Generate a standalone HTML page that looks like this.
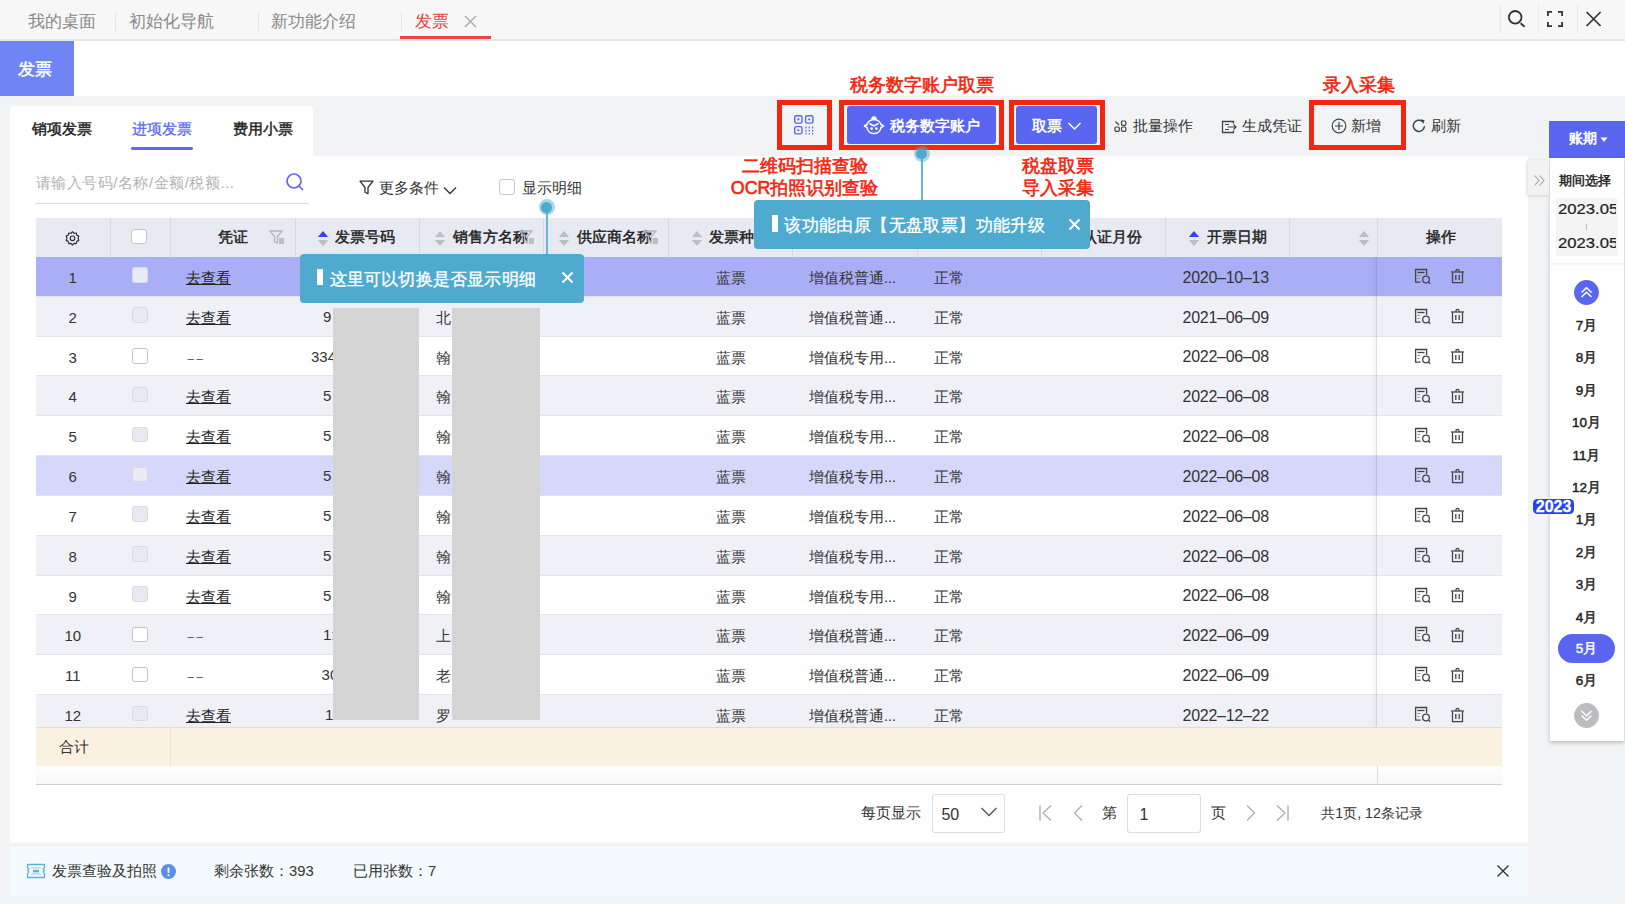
<!DOCTYPE html>
<html><head><meta charset="utf-8"><style>
html,body{margin:0;padding:0;width:1625px;height:904px;overflow:hidden;background:#f2f3f5}
#root{position:relative;width:1625px;height:904px;overflow:hidden;font-family:"Liberation Sans",sans-serif}
#root div,#root svg{position:absolute;box-sizing:border-box}
#root div div{}
</style></head><body><div id="root">
<div style="left:0px;top:0px;width:1625px;height:39px;background:#f7f7f8"></div>
<div style="left:0px;top:39px;width:1625px;height:1.5px;background:#e4e6ee"></div>
<div style="left:27.5px;top:10px;height:24px;line-height:24px;font-size:17px;color:#8a8a8a;font-weight:normal;white-space:nowrap;">我的桌面</div>
<div style="left:128.5px;top:10px;height:24px;line-height:24px;font-size:17px;color:#8a8a8a;font-weight:normal;white-space:nowrap;">初始化导航</div>
<div style="left:271px;top:10px;height:24px;line-height:24px;font-size:17px;color:#8a8a8a;font-weight:normal;white-space:nowrap;">新功能介绍</div>
<div style="left:114.5px;top:12px;width:1px;height:19px;background:#e3e5ee"></div>
<div style="left:258px;top:12px;width:1px;height:19px;background:#e3e5ee"></div>
<div style="left:400.5px;top:12px;width:1px;height:19px;background:#e3e5ee"></div>
<div style="left:415px;top:10px;height:24px;line-height:24px;font-size:17px;color:#e8403f;font-weight:normal;white-space:nowrap;">发票</div>
<svg style="left:464px;top:15px" width="13" height="13" viewBox="0 0 13 13"><path d="M1 1L12 12M12 1L1 12" stroke="#a8a8a8" stroke-width="1.4"/></svg>
<div style="left:400px;top:36px;width:91px;height:3px;background:#e8454a"></div>
<div style="left:1499.5px;top:5px;width:1px;height:28px;background:#e6e7ef"></div>
<div style="left:1538px;top:5px;width:1px;height:28px;background:#e6e7ef"></div>
<div style="left:1577px;top:5px;width:1px;height:28px;background:#e6e7ef"></div>
<svg style="left:1506px;top:8px" width="22" height="22" viewBox="0 0 22 22"><circle cx="9.2" cy="9.3" r="6.3" fill="none" stroke="#333" stroke-width="1.8"/><path d="M14.6 15.3L18.6 18.7" stroke="#333" stroke-width="1.8"/></svg>
<svg style="left:1546px;top:10px" width="18" height="18" viewBox="0 0 18 18"><path d="M1.9 6V1.9H6M12 1.9H16.1V6M16.1 12V16.1H12M6 16.1H1.9V12" fill="none" stroke="#333" stroke-width="1.8"/></svg>
<svg style="left:1585px;top:11px" width="17" height="16" viewBox="0 0 17 16"><path d="M1.6 1L15.6 15M15.6 1L1.6 15" stroke="#333" stroke-width="1.7"/></svg>
<div style="left:0px;top:40.5px;width:1625px;height:55.5px;background:#ffffff"></div>
<div style="left:0px;top:41px;width:74px;height:55px;background:#6f85f5"></div>
<div style="left:18px;top:59px;height:22px;line-height:22px;font-size:17px;color:#ffffff;font-weight:normal;white-space:nowrap;-webkit-text-stroke:0.45px #ffffff;">发票</div>
<div style="left:0px;top:96px;width:1625px;height:808px;background:#f2f3f5"></div>
<div style="left:10px;top:106px;width:303px;height:52px;background:#fff;border-radius:4px 4px 0 0"></div>
<div style="left:31.5px;top:119px;height:20px;line-height:20px;font-size:14.5px;color:#222;font-weight:normal;white-space:nowrap;-webkit-text-stroke:0.45px #222;">销项发票</div>
<div style="left:132px;top:119px;height:20px;line-height:20px;font-size:14.5px;color:#5a6bf0;font-weight:normal;white-space:nowrap;-webkit-text-stroke:0.3px #5a6bf0;">进项发票</div>
<div style="left:233px;top:119px;height:20px;line-height:20px;font-size:14.5px;color:#222;font-weight:normal;white-space:nowrap;-webkit-text-stroke:0.45px #222;">费用小票</div>
<div style="left:131px;top:146.5px;width:61.5px;height:3px;background:#5a6bf0;border-radius:2px"></div>
<div style="left:10px;top:156px;width:1518px;height:686px;background:#fff"></div>
<div style="left:35.5px;top:173px;height:20px;line-height:20px;font-size:14.8px;color:#b3b3b3;font-weight:normal;white-space:nowrap;letter-spacing:0.55px">请输入号码/名称/金额/税额...</div>
<svg style="left:284px;top:171px" width="22" height="22" viewBox="0 0 22 22"><circle cx="10" cy="10" r="7" fill="none" stroke="#5a6bf0" stroke-width="1.7"/><path d="M15 15L19 19" stroke="#5a6bf0" stroke-width="1.7"/></svg>
<div style="left:34.5px;top:202.5px;width:274.5px;height:1px;background:#dcdcdc"></div>
<svg style="left:359px;top:180px" width="15" height="15" viewBox="0 0 15 15"><path d="M1 1.2H14L9 7.5V13.8L6 12.2V7.5Z" fill="none" stroke="#333" stroke-width="1.3" stroke-linejoin="round"/></svg>
<div style="left:379px;top:178px;height:20px;line-height:20px;font-size:14.5px;color:#333;font-weight:normal;white-space:nowrap;">更多条件</div>
<svg style="left:443px;top:186px" width="14" height="9" viewBox="0 0 14 9"><path d="M1 1.5L7 7.5L13 1.5" fill="none" stroke="#333" stroke-width="1.3"/></svg>
<div style="left:499px;top:179px;width:15.5px;height:15.5px;background:#fff;border:1px solid #c8c8c8;border-radius:3px"></div>
<div style="left:522px;top:178px;height:20px;line-height:20px;font-size:14.5px;color:#333;font-weight:normal;white-space:nowrap;">显示明细</div>
<div style="left:36px;top:218px;width:1465.5px;height:39px;background:#e8eaf3"></div>
<div style="left:109.5px;top:218px;width:1px;height:39px;background:#d6d8e2"></div>
<div style="left:170px;top:218px;width:1px;height:39px;background:#d6d8e2"></div>
<div style="left:294.5px;top:218px;width:1px;height:39px;background:#d6d8e2"></div>
<div style="left:418.7px;top:218px;width:1px;height:39px;background:#d6d8e2"></div>
<div style="left:543.4px;top:218px;width:1px;height:39px;background:#d6d8e2"></div>
<div style="left:668px;top:218px;width:1px;height:39px;background:#d6d8e2"></div>
<div style="left:792px;top:218px;width:1px;height:39px;background:#d6d8e2"></div>
<div style="left:916.5px;top:218px;width:1px;height:39px;background:#d6d8e2"></div>
<div style="left:1040.8px;top:218px;width:1px;height:39px;background:#d6d8e2"></div>
<div style="left:1165.4px;top:218px;width:1px;height:39px;background:#d6d8e2"></div>
<div style="left:1289.3px;top:218px;width:1px;height:39px;background:#d6d8e2"></div>
<div style="left:1376.7px;top:218px;width:1px;height:39px;background:#d6d8e2"></div>
<svg style="left:64px;top:230px" width="17" height="17" viewBox="0 0 17 17"><path d="M8.5 1.6L10 3.3L12.2 3L12.8 5.1L14.8 6.1L14.1 8.3L14.8 10.4L12.8 11.4L12.2 13.6L10 13.3L8.5 15L7 13.3L4.8 13.6L4.2 11.4L2.2 10.4L2.9 8.3L2.2 6.1L4.2 5.1L4.8 3L7 3.3Z" fill="none" stroke="#333" stroke-width="1.2" stroke-linejoin="round"/><circle cx="8.5" cy="8.3" r="2.3" fill="none" stroke="#333" stroke-width="1.2"/></svg>
<div style="left:131px;top:228.7px;width:15.5px;height:15.5px;background:#fff;border:1px solid #c4c4c8;border-radius:3px"></div>
<div style="left:217.7px;top:227px;height:20px;line-height:20px;font-size:14.5px;color:#222;font-weight:normal;white-space:nowrap;-webkit-text-stroke:0.45px #222;">凭证</div>
<svg style="left:269px;top:230px" width="16" height="15" viewBox="0 0 16 15"><path d="M1 1H13L8.5 6.5V13L5.5 11.5V6.5Z" fill="none" stroke="#b4b4b8" stroke-width="1.3"/><rect x="10" y="8" width="5" height="6" fill="#bdbdc2"/></svg>
<svg style="left:317px;top:229.8px" width="12" height="17" viewBox="0 0 12 17"><path d="M6 1L11.2 7H0.8Z" fill="#3343f3"/><path d="M6 16L11.2 10H0.8Z" fill="#bdbec4"/></svg>
<div style="left:335px;top:227px;height:20px;line-height:20px;font-size:14.5px;color:#222;font-weight:normal;white-space:nowrap;-webkit-text-stroke:0.45px #222;">发票号码</div>
<svg style="left:433.5px;top:229.8px" width="12" height="17" viewBox="0 0 12 17"><path d="M6 1L11.2 7H0.8Z" fill="#bdbec4"/><path d="M6 16L11.2 10H0.8Z" fill="#bdbec4"/></svg>
<div style="left:453px;top:227px;height:20px;line-height:20px;font-size:14.5px;color:#222;font-weight:normal;white-space:nowrap;-webkit-text-stroke:0.45px #222;">销售方名称</div>
<svg style="left:519px;top:230px" width="16" height="15" viewBox="0 0 16 15"><path d="M1 1H13L8.5 6.5V13L5.5 11.5V6.5Z" fill="none" stroke="#b4b4b8" stroke-width="1.3"/><rect x="10" y="8" width="5" height="6" fill="#bdbdc2"/></svg>
<svg style="left:558px;top:229.8px" width="12" height="17" viewBox="0 0 12 17"><path d="M6 1L11.2 7H0.8Z" fill="#bdbec4"/><path d="M6 16L11.2 10H0.8Z" fill="#bdbec4"/></svg>
<div style="left:576.8px;top:227px;height:20px;line-height:20px;font-size:14.5px;color:#222;font-weight:normal;white-space:nowrap;-webkit-text-stroke:0.45px #222;">供应商名称</div>
<svg style="left:643px;top:230px" width="16" height="15" viewBox="0 0 16 15"><path d="M1 1H13L8.5 6.5V13L5.5 11.5V6.5Z" fill="none" stroke="#b4b4b8" stroke-width="1.3"/><rect x="10" y="8" width="5" height="6" fill="#bdbdc2"/></svg>
<svg style="left:690.5px;top:229.8px" width="12" height="17" viewBox="0 0 12 17"><path d="M6 1L11.2 7H0.8Z" fill="#bdbec4"/><path d="M6 16L11.2 10H0.8Z" fill="#bdbec4"/></svg>
<div style="left:709px;top:227px;height:20px;line-height:20px;font-size:14.5px;color:#222;font-weight:normal;white-space:nowrap;-webkit-text-stroke:0.45px #222;">发票种类</div>
<svg style="left:815px;top:229.8px" width="12" height="17" viewBox="0 0 12 17"><path d="M6 1L11.2 7H0.8Z" fill="#bdbec4"/><path d="M6 16L11.2 10H0.8Z" fill="#bdbec4"/></svg>
<div style="left:834px;top:227px;height:20px;line-height:20px;font-size:14.5px;color:#222;font-weight:normal;white-space:nowrap;-webkit-text-stroke:0.45px #222;">发票类型</div>
<svg style="left:939px;top:229.8px" width="12" height="17" viewBox="0 0 12 17"><path d="M6 1L11.2 7H0.8Z" fill="#bdbec4"/><path d="M6 16L11.2 10H0.8Z" fill="#bdbec4"/></svg>
<div style="left:958px;top:227px;height:20px;line-height:20px;font-size:14.5px;color:#222;font-weight:normal;white-space:nowrap;-webkit-text-stroke:0.45px #222;">发票状态</div>
<svg style="left:1063px;top:229.8px" width="12" height="17" viewBox="0 0 12 17"><path d="M6 1L11.2 7H0.8Z" fill="#bdbec4"/><path d="M6 16L11.2 10H0.8Z" fill="#bdbec4"/></svg>
<div style="left:1082px;top:227px;height:20px;line-height:20px;font-size:14.5px;color:#222;font-weight:normal;white-space:nowrap;-webkit-text-stroke:0.45px #222;">认证月份</div>
<svg style="left:1188px;top:229.8px" width="12" height="17" viewBox="0 0 12 17"><path d="M6 1L11.2 7H0.8Z" fill="#3343f3"/><path d="M6 16L11.2 10H0.8Z" fill="#bdbec4"/></svg>
<div style="left:1207px;top:227px;height:20px;line-height:20px;font-size:14.5px;color:#222;font-weight:normal;white-space:nowrap;-webkit-text-stroke:0.45px #222;">开票日期</div>
<svg style="left:1358px;top:229.8px" width="12" height="17" viewBox="0 0 12 17"><path d="M6 1L11.2 7H0.8Z" fill="#bdbec4"/><path d="M6 16L11.2 10H0.8Z" fill="#bdbec4"/></svg>
<div style="left:1425.6px;top:227px;height:20px;line-height:20px;font-size:14.5px;color:#222;font-weight:normal;white-space:nowrap;-webkit-text-stroke:0.45px #222;">操作</div>
<div style="left:36px;top:257px;width:1465.5px;height:469.5px;overflow:hidden">
<div style="left:0px;top:0.0px;width:1465.5px;height:39.83px;background:#a9aef6"></div>
<div style="left:0px;top:38.83px;width:1465.5px;height:1px;background:#e3e4ea"></div>
<div style="left:0px;top:10.915px;height:20px;line-height:20px;font-size:15px;color:#333;font-weight:normal;white-space:nowrap;width:73.5px;text-align:center">1</div>
<div style="left:96px;top:10.415px;width:15.5px;height:15.5px;background:#e8e9f3;border:1px solid #d9dbe3;border-radius:3px"></div>
<div style="left:150px;top:10.915px;height:20px;line-height:20px;font-size:15px;color:#222;font-weight:normal;white-space:nowrap;"><span style="text-decoration:underline">去查看</span></div>
<div style="left:680px;top:10.915px;height:20px;line-height:20px;font-size:14.5px;color:#333;font-weight:normal;white-space:nowrap;">蓝票</div>
<div style="left:773px;top:10.915px;height:20px;line-height:20px;font-size:14.5px;color:#333;font-weight:normal;white-space:nowrap;">增值税普通...</div>
<div style="left:897.5px;top:10.915px;height:20px;line-height:20px;font-size:14.5px;color:#333;font-weight:normal;white-space:nowrap;">正常</div>
<div style="left:1146.6px;top:10.715px;height:20px;line-height:20px;font-size:16px;color:#333;font-weight:normal;white-space:nowrap;letter-spacing:-0.28px">2020–10–13</div>
<svg style="left:1377px;top:10.915px" width="20" height="18" viewBox="0 0 20 18"><path d="M7.5 14.2H2.6V1.5H13.6V7" fill="none" stroke="#444" stroke-width="1.3"/><path d="M4.5 4.5H11.5" stroke="#444" stroke-width="1.3"/><path d="M4.5 7.5H7M4.5 10.5H6.5" stroke="#888" stroke-width="1.2"/><circle cx="13" cy="11.5" r="3.3" fill="none" stroke="#444" stroke-width="1.3"/><path d="M15.4 13.9L17.2 15.7" stroke="#444" stroke-width="1.3"/></svg>
<svg style="left:1414px;top:10.415px" width="15" height="18" viewBox="0 0 15 18"><path d="M1 5H14" stroke="#444" stroke-width="1.3"/><path d="M6 4.8V3.8A1.5 1.5 0 0 1 9 3.8V4.8" fill="none" stroke="#444" stroke-width="1.3"/><path d="M2.5 5.5V15.7H12.5V5.5" fill="none" stroke="#444" stroke-width="1.3"/><path d="M5.8 8V13M9.2 8V13" stroke="#444" stroke-width="1.3"/></svg>
<div style="left:0px;top:39.83px;width:1465.5px;height:39.83px;background:#f0f1f7"></div>
<div style="left:0px;top:78.66px;width:1465.5px;height:1px;background:#e3e4ea"></div>
<div style="left:0px;top:50.745px;height:20px;line-height:20px;font-size:15px;color:#333;font-weight:normal;white-space:nowrap;width:73.5px;text-align:center">2</div>
<div style="left:96px;top:50.245px;width:15.5px;height:15.5px;background:#e8e9f3;border:1px solid #d9dbe3;border-radius:3px"></div>
<div style="left:150px;top:50.745px;height:20px;line-height:20px;font-size:15px;color:#222;font-weight:normal;white-space:nowrap;"><span style="text-decoration:underline">去查看</span></div>
<div style="left:287.0px;top:49.745px;height:20px;line-height:20px;font-size:15px;color:#333;font-weight:normal;white-space:nowrap;width:9.800000000000011px;overflow:hidden">9</div>
<div style="left:400px;top:50.745px;height:20px;line-height:20px;font-size:14.5px;color:#333;font-weight:normal;white-space:nowrap;width:15.8px;overflow:hidden">北</div>
<div style="left:680px;top:50.745px;height:20px;line-height:20px;font-size:14.5px;color:#333;font-weight:normal;white-space:nowrap;">蓝票</div>
<div style="left:773px;top:50.745px;height:20px;line-height:20px;font-size:14.5px;color:#333;font-weight:normal;white-space:nowrap;">增值税普通...</div>
<div style="left:897.5px;top:50.745px;height:20px;line-height:20px;font-size:14.5px;color:#333;font-weight:normal;white-space:nowrap;">正常</div>
<div style="left:1146.6px;top:50.545px;height:20px;line-height:20px;font-size:16px;color:#333;font-weight:normal;white-space:nowrap;letter-spacing:-0.28px">2021–06–09</div>
<svg style="left:1377px;top:50.745px" width="20" height="18" viewBox="0 0 20 18"><path d="M7.5 14.2H2.6V1.5H13.6V7" fill="none" stroke="#444" stroke-width="1.3"/><path d="M4.5 4.5H11.5" stroke="#444" stroke-width="1.3"/><path d="M4.5 7.5H7M4.5 10.5H6.5" stroke="#888" stroke-width="1.2"/><circle cx="13" cy="11.5" r="3.3" fill="none" stroke="#444" stroke-width="1.3"/><path d="M15.4 13.9L17.2 15.7" stroke="#444" stroke-width="1.3"/></svg>
<svg style="left:1414px;top:50.245px" width="15" height="18" viewBox="0 0 15 18"><path d="M1 5H14" stroke="#444" stroke-width="1.3"/><path d="M6 4.8V3.8A1.5 1.5 0 0 1 9 3.8V4.8" fill="none" stroke="#444" stroke-width="1.3"/><path d="M2.5 5.5V15.7H12.5V5.5" fill="none" stroke="#444" stroke-width="1.3"/><path d="M5.8 8V13M9.2 8V13" stroke="#444" stroke-width="1.3"/></svg>
<div style="left:0px;top:79.66px;width:1465.5px;height:39.83px;background:#ffffff"></div>
<div style="left:0px;top:118.49px;width:1465.5px;height:1px;background:#e3e4ea"></div>
<div style="left:0px;top:90.57499999999999px;height:20px;line-height:20px;font-size:15px;color:#333;font-weight:normal;white-space:nowrap;width:73.5px;text-align:center">3</div>
<div style="left:96px;top:91.07499999999999px;width:15.5px;height:15.5px;background:#fff;border:1px solid #c4c4c8;border-radius:3px"></div>
<div style="left:151.6px;top:90.57499999999999px;height:20px;line-height:20px;font-size:11.5px;color:#444;font-weight:normal;white-space:nowrap;letter-spacing:2.5px">––</div>
<div style="left:275.0px;top:89.57499999999999px;height:20px;line-height:20px;font-size:15px;color:#333;font-weight:normal;white-space:nowrap;width:21.80000000000001px;overflow:hidden">3344</div>
<div style="left:400px;top:90.57499999999999px;height:20px;line-height:20px;font-size:14.5px;color:#333;font-weight:normal;white-space:nowrap;width:15.8px;overflow:hidden">翰</div>
<div style="left:680px;top:90.57499999999999px;height:20px;line-height:20px;font-size:14.5px;color:#333;font-weight:normal;white-space:nowrap;">蓝票</div>
<div style="left:773px;top:90.57499999999999px;height:20px;line-height:20px;font-size:14.5px;color:#333;font-weight:normal;white-space:nowrap;">增值税专用...</div>
<div style="left:897.5px;top:90.57499999999999px;height:20px;line-height:20px;font-size:14.5px;color:#333;font-weight:normal;white-space:nowrap;">正常</div>
<div style="left:1146.6px;top:90.37499999999999px;height:20px;line-height:20px;font-size:16px;color:#333;font-weight:normal;white-space:nowrap;letter-spacing:-0.28px">2022–06–08</div>
<svg style="left:1377px;top:90.57499999999999px" width="20" height="18" viewBox="0 0 20 18"><path d="M7.5 14.2H2.6V1.5H13.6V7" fill="none" stroke="#444" stroke-width="1.3"/><path d="M4.5 4.5H11.5" stroke="#444" stroke-width="1.3"/><path d="M4.5 7.5H7M4.5 10.5H6.5" stroke="#888" stroke-width="1.2"/><circle cx="13" cy="11.5" r="3.3" fill="none" stroke="#444" stroke-width="1.3"/><path d="M15.4 13.9L17.2 15.7" stroke="#444" stroke-width="1.3"/></svg>
<svg style="left:1414px;top:90.07499999999999px" width="15" height="18" viewBox="0 0 15 18"><path d="M1 5H14" stroke="#444" stroke-width="1.3"/><path d="M6 4.8V3.8A1.5 1.5 0 0 1 9 3.8V4.8" fill="none" stroke="#444" stroke-width="1.3"/><path d="M2.5 5.5V15.7H12.5V5.5" fill="none" stroke="#444" stroke-width="1.3"/><path d="M5.8 8V13M9.2 8V13" stroke="#444" stroke-width="1.3"/></svg>
<div style="left:0px;top:119.49px;width:1465.5px;height:39.83px;background:#f0f1f7"></div>
<div style="left:0px;top:158.32px;width:1465.5px;height:1px;background:#e3e4ea"></div>
<div style="left:0px;top:130.405px;height:20px;line-height:20px;font-size:15px;color:#333;font-weight:normal;white-space:nowrap;width:73.5px;text-align:center">4</div>
<div style="left:96px;top:129.905px;width:15.5px;height:15.5px;background:#e8e9f3;border:1px solid #d9dbe3;border-radius:3px"></div>
<div style="left:150px;top:130.405px;height:20px;line-height:20px;font-size:15px;color:#222;font-weight:normal;white-space:nowrap;"><span style="text-decoration:underline">去查看</span></div>
<div style="left:287.0px;top:129.405px;height:20px;line-height:20px;font-size:15px;color:#333;font-weight:normal;white-space:nowrap;width:9.800000000000011px;overflow:hidden">5</div>
<div style="left:400px;top:130.405px;height:20px;line-height:20px;font-size:14.5px;color:#333;font-weight:normal;white-space:nowrap;width:15.8px;overflow:hidden">翰</div>
<div style="left:680px;top:130.405px;height:20px;line-height:20px;font-size:14.5px;color:#333;font-weight:normal;white-space:nowrap;">蓝票</div>
<div style="left:773px;top:130.405px;height:20px;line-height:20px;font-size:14.5px;color:#333;font-weight:normal;white-space:nowrap;">增值税专用...</div>
<div style="left:897.5px;top:130.405px;height:20px;line-height:20px;font-size:14.5px;color:#333;font-weight:normal;white-space:nowrap;">正常</div>
<div style="left:1146.6px;top:130.205px;height:20px;line-height:20px;font-size:16px;color:#333;font-weight:normal;white-space:nowrap;letter-spacing:-0.28px">2022–06–08</div>
<svg style="left:1377px;top:130.405px" width="20" height="18" viewBox="0 0 20 18"><path d="M7.5 14.2H2.6V1.5H13.6V7" fill="none" stroke="#444" stroke-width="1.3"/><path d="M4.5 4.5H11.5" stroke="#444" stroke-width="1.3"/><path d="M4.5 7.5H7M4.5 10.5H6.5" stroke="#888" stroke-width="1.2"/><circle cx="13" cy="11.5" r="3.3" fill="none" stroke="#444" stroke-width="1.3"/><path d="M15.4 13.9L17.2 15.7" stroke="#444" stroke-width="1.3"/></svg>
<svg style="left:1414px;top:129.905px" width="15" height="18" viewBox="0 0 15 18"><path d="M1 5H14" stroke="#444" stroke-width="1.3"/><path d="M6 4.8V3.8A1.5 1.5 0 0 1 9 3.8V4.8" fill="none" stroke="#444" stroke-width="1.3"/><path d="M2.5 5.5V15.7H12.5V5.5" fill="none" stroke="#444" stroke-width="1.3"/><path d="M5.8 8V13M9.2 8V13" stroke="#444" stroke-width="1.3"/></svg>
<div style="left:0px;top:159.32px;width:1465.5px;height:39.83px;background:#ffffff"></div>
<div style="left:0px;top:198.14999999999998px;width:1465.5px;height:1px;background:#e3e4ea"></div>
<div style="left:0px;top:170.23499999999999px;height:20px;line-height:20px;font-size:15px;color:#333;font-weight:normal;white-space:nowrap;width:73.5px;text-align:center">5</div>
<div style="left:96px;top:169.73499999999999px;width:15.5px;height:15.5px;background:#e8e9f3;border:1px solid #d9dbe3;border-radius:3px"></div>
<div style="left:150px;top:170.23499999999999px;height:20px;line-height:20px;font-size:15px;color:#222;font-weight:normal;white-space:nowrap;"><span style="text-decoration:underline">去查看</span></div>
<div style="left:287.0px;top:169.23499999999999px;height:20px;line-height:20px;font-size:15px;color:#333;font-weight:normal;white-space:nowrap;width:9.800000000000011px;overflow:hidden">5</div>
<div style="left:400px;top:170.23499999999999px;height:20px;line-height:20px;font-size:14.5px;color:#333;font-weight:normal;white-space:nowrap;width:15.8px;overflow:hidden">翰</div>
<div style="left:680px;top:170.23499999999999px;height:20px;line-height:20px;font-size:14.5px;color:#333;font-weight:normal;white-space:nowrap;">蓝票</div>
<div style="left:773px;top:170.23499999999999px;height:20px;line-height:20px;font-size:14.5px;color:#333;font-weight:normal;white-space:nowrap;">增值税专用...</div>
<div style="left:897.5px;top:170.23499999999999px;height:20px;line-height:20px;font-size:14.5px;color:#333;font-weight:normal;white-space:nowrap;">正常</div>
<div style="left:1146.6px;top:170.035px;height:20px;line-height:20px;font-size:16px;color:#333;font-weight:normal;white-space:nowrap;letter-spacing:-0.28px">2022–06–08</div>
<svg style="left:1377px;top:170.23499999999999px" width="20" height="18" viewBox="0 0 20 18"><path d="M7.5 14.2H2.6V1.5H13.6V7" fill="none" stroke="#444" stroke-width="1.3"/><path d="M4.5 4.5H11.5" stroke="#444" stroke-width="1.3"/><path d="M4.5 7.5H7M4.5 10.5H6.5" stroke="#888" stroke-width="1.2"/><circle cx="13" cy="11.5" r="3.3" fill="none" stroke="#444" stroke-width="1.3"/><path d="M15.4 13.9L17.2 15.7" stroke="#444" stroke-width="1.3"/></svg>
<svg style="left:1414px;top:169.73499999999999px" width="15" height="18" viewBox="0 0 15 18"><path d="M1 5H14" stroke="#444" stroke-width="1.3"/><path d="M6 4.8V3.8A1.5 1.5 0 0 1 9 3.8V4.8" fill="none" stroke="#444" stroke-width="1.3"/><path d="M2.5 5.5V15.7H12.5V5.5" fill="none" stroke="#444" stroke-width="1.3"/><path d="M5.8 8V13M9.2 8V13" stroke="#444" stroke-width="1.3"/></svg>
<div style="left:0px;top:199.14999999999998px;width:1465.5px;height:39.83px;background:#d5d8fa"></div>
<div style="left:0px;top:237.97999999999996px;width:1465.5px;height:1px;background:#e3e4ea"></div>
<div style="left:0px;top:210.06499999999997px;height:20px;line-height:20px;font-size:15px;color:#333;font-weight:normal;white-space:nowrap;width:73.5px;text-align:center">6</div>
<div style="left:96px;top:209.56499999999997px;width:15.5px;height:15.5px;background:#e8e9f3;border:1px solid #d9dbe3;border-radius:3px"></div>
<div style="left:150px;top:210.06499999999997px;height:20px;line-height:20px;font-size:15px;color:#222;font-weight:normal;white-space:nowrap;"><span style="text-decoration:underline">去查看</span></div>
<div style="left:287.0px;top:209.06499999999997px;height:20px;line-height:20px;font-size:15px;color:#333;font-weight:normal;white-space:nowrap;width:9.800000000000011px;overflow:hidden">5</div>
<div style="left:400px;top:210.06499999999997px;height:20px;line-height:20px;font-size:14.5px;color:#333;font-weight:normal;white-space:nowrap;width:15.8px;overflow:hidden">翰</div>
<div style="left:680px;top:210.06499999999997px;height:20px;line-height:20px;font-size:14.5px;color:#333;font-weight:normal;white-space:nowrap;">蓝票</div>
<div style="left:773px;top:210.06499999999997px;height:20px;line-height:20px;font-size:14.5px;color:#333;font-weight:normal;white-space:nowrap;">增值税专用...</div>
<div style="left:897.5px;top:210.06499999999997px;height:20px;line-height:20px;font-size:14.5px;color:#333;font-weight:normal;white-space:nowrap;">正常</div>
<div style="left:1146.6px;top:209.86499999999998px;height:20px;line-height:20px;font-size:16px;color:#333;font-weight:normal;white-space:nowrap;letter-spacing:-0.28px">2022–06–08</div>
<svg style="left:1377px;top:210.06499999999997px" width="20" height="18" viewBox="0 0 20 18"><path d="M7.5 14.2H2.6V1.5H13.6V7" fill="none" stroke="#444" stroke-width="1.3"/><path d="M4.5 4.5H11.5" stroke="#444" stroke-width="1.3"/><path d="M4.5 7.5H7M4.5 10.5H6.5" stroke="#888" stroke-width="1.2"/><circle cx="13" cy="11.5" r="3.3" fill="none" stroke="#444" stroke-width="1.3"/><path d="M15.4 13.9L17.2 15.7" stroke="#444" stroke-width="1.3"/></svg>
<svg style="left:1414px;top:209.56499999999997px" width="15" height="18" viewBox="0 0 15 18"><path d="M1 5H14" stroke="#444" stroke-width="1.3"/><path d="M6 4.8V3.8A1.5 1.5 0 0 1 9 3.8V4.8" fill="none" stroke="#444" stroke-width="1.3"/><path d="M2.5 5.5V15.7H12.5V5.5" fill="none" stroke="#444" stroke-width="1.3"/><path d="M5.8 8V13M9.2 8V13" stroke="#444" stroke-width="1.3"/></svg>
<div style="left:0px;top:238.98px;width:1465.5px;height:39.83px;background:#ffffff"></div>
<div style="left:0px;top:277.81px;width:1465.5px;height:1px;background:#e3e4ea"></div>
<div style="left:0px;top:249.89499999999998px;height:20px;line-height:20px;font-size:15px;color:#333;font-weight:normal;white-space:nowrap;width:73.5px;text-align:center">7</div>
<div style="left:96px;top:249.39499999999998px;width:15.5px;height:15.5px;background:#e8e9f3;border:1px solid #d9dbe3;border-radius:3px"></div>
<div style="left:150px;top:249.89499999999998px;height:20px;line-height:20px;font-size:15px;color:#222;font-weight:normal;white-space:nowrap;"><span style="text-decoration:underline">去查看</span></div>
<div style="left:287.0px;top:248.89499999999998px;height:20px;line-height:20px;font-size:15px;color:#333;font-weight:normal;white-space:nowrap;width:9.800000000000011px;overflow:hidden">5</div>
<div style="left:400px;top:249.89499999999998px;height:20px;line-height:20px;font-size:14.5px;color:#333;font-weight:normal;white-space:nowrap;width:15.8px;overflow:hidden">翰</div>
<div style="left:680px;top:249.89499999999998px;height:20px;line-height:20px;font-size:14.5px;color:#333;font-weight:normal;white-space:nowrap;">蓝票</div>
<div style="left:773px;top:249.89499999999998px;height:20px;line-height:20px;font-size:14.5px;color:#333;font-weight:normal;white-space:nowrap;">增值税专用...</div>
<div style="left:897.5px;top:249.89499999999998px;height:20px;line-height:20px;font-size:14.5px;color:#333;font-weight:normal;white-space:nowrap;">正常</div>
<div style="left:1146.6px;top:249.695px;height:20px;line-height:20px;font-size:16px;color:#333;font-weight:normal;white-space:nowrap;letter-spacing:-0.28px">2022–06–08</div>
<svg style="left:1377px;top:249.89499999999998px" width="20" height="18" viewBox="0 0 20 18"><path d="M7.5 14.2H2.6V1.5H13.6V7" fill="none" stroke="#444" stroke-width="1.3"/><path d="M4.5 4.5H11.5" stroke="#444" stroke-width="1.3"/><path d="M4.5 7.5H7M4.5 10.5H6.5" stroke="#888" stroke-width="1.2"/><circle cx="13" cy="11.5" r="3.3" fill="none" stroke="#444" stroke-width="1.3"/><path d="M15.4 13.9L17.2 15.7" stroke="#444" stroke-width="1.3"/></svg>
<svg style="left:1414px;top:249.39499999999998px" width="15" height="18" viewBox="0 0 15 18"><path d="M1 5H14" stroke="#444" stroke-width="1.3"/><path d="M6 4.8V3.8A1.5 1.5 0 0 1 9 3.8V4.8" fill="none" stroke="#444" stroke-width="1.3"/><path d="M2.5 5.5V15.7H12.5V5.5" fill="none" stroke="#444" stroke-width="1.3"/><path d="M5.8 8V13M9.2 8V13" stroke="#444" stroke-width="1.3"/></svg>
<div style="left:0px;top:278.81px;width:1465.5px;height:39.83px;background:#f0f1f7"></div>
<div style="left:0px;top:317.64px;width:1465.5px;height:1px;background:#e3e4ea"></div>
<div style="left:0px;top:289.725px;height:20px;line-height:20px;font-size:15px;color:#333;font-weight:normal;white-space:nowrap;width:73.5px;text-align:center">8</div>
<div style="left:96px;top:289.225px;width:15.5px;height:15.5px;background:#e8e9f3;border:1px solid #d9dbe3;border-radius:3px"></div>
<div style="left:150px;top:289.725px;height:20px;line-height:20px;font-size:15px;color:#222;font-weight:normal;white-space:nowrap;"><span style="text-decoration:underline">去查看</span></div>
<div style="left:287.0px;top:288.725px;height:20px;line-height:20px;font-size:15px;color:#333;font-weight:normal;white-space:nowrap;width:9.800000000000011px;overflow:hidden">5</div>
<div style="left:400px;top:289.725px;height:20px;line-height:20px;font-size:14.5px;color:#333;font-weight:normal;white-space:nowrap;width:15.8px;overflow:hidden">翰</div>
<div style="left:680px;top:289.725px;height:20px;line-height:20px;font-size:14.5px;color:#333;font-weight:normal;white-space:nowrap;">蓝票</div>
<div style="left:773px;top:289.725px;height:20px;line-height:20px;font-size:14.5px;color:#333;font-weight:normal;white-space:nowrap;">增值税专用...</div>
<div style="left:897.5px;top:289.725px;height:20px;line-height:20px;font-size:14.5px;color:#333;font-weight:normal;white-space:nowrap;">正常</div>
<div style="left:1146.6px;top:289.52500000000003px;height:20px;line-height:20px;font-size:16px;color:#333;font-weight:normal;white-space:nowrap;letter-spacing:-0.28px">2022–06–08</div>
<svg style="left:1377px;top:289.725px" width="20" height="18" viewBox="0 0 20 18"><path d="M7.5 14.2H2.6V1.5H13.6V7" fill="none" stroke="#444" stroke-width="1.3"/><path d="M4.5 4.5H11.5" stroke="#444" stroke-width="1.3"/><path d="M4.5 7.5H7M4.5 10.5H6.5" stroke="#888" stroke-width="1.2"/><circle cx="13" cy="11.5" r="3.3" fill="none" stroke="#444" stroke-width="1.3"/><path d="M15.4 13.9L17.2 15.7" stroke="#444" stroke-width="1.3"/></svg>
<svg style="left:1414px;top:289.225px" width="15" height="18" viewBox="0 0 15 18"><path d="M1 5H14" stroke="#444" stroke-width="1.3"/><path d="M6 4.8V3.8A1.5 1.5 0 0 1 9 3.8V4.8" fill="none" stroke="#444" stroke-width="1.3"/><path d="M2.5 5.5V15.7H12.5V5.5" fill="none" stroke="#444" stroke-width="1.3"/><path d="M5.8 8V13M9.2 8V13" stroke="#444" stroke-width="1.3"/></svg>
<div style="left:0px;top:318.64px;width:1465.5px;height:39.83px;background:#ffffff"></div>
<div style="left:0px;top:357.46999999999997px;width:1465.5px;height:1px;background:#e3e4ea"></div>
<div style="left:0px;top:329.555px;height:20px;line-height:20px;font-size:15px;color:#333;font-weight:normal;white-space:nowrap;width:73.5px;text-align:center">9</div>
<div style="left:96px;top:329.055px;width:15.5px;height:15.5px;background:#e8e9f3;border:1px solid #d9dbe3;border-radius:3px"></div>
<div style="left:150px;top:329.555px;height:20px;line-height:20px;font-size:15px;color:#222;font-weight:normal;white-space:nowrap;"><span style="text-decoration:underline">去查看</span></div>
<div style="left:287.0px;top:328.555px;height:20px;line-height:20px;font-size:15px;color:#333;font-weight:normal;white-space:nowrap;width:9.800000000000011px;overflow:hidden">5</div>
<div style="left:400px;top:329.555px;height:20px;line-height:20px;font-size:14.5px;color:#333;font-weight:normal;white-space:nowrap;width:15.8px;overflow:hidden">翰</div>
<div style="left:680px;top:329.555px;height:20px;line-height:20px;font-size:14.5px;color:#333;font-weight:normal;white-space:nowrap;">蓝票</div>
<div style="left:773px;top:329.555px;height:20px;line-height:20px;font-size:14.5px;color:#333;font-weight:normal;white-space:nowrap;">增值税专用...</div>
<div style="left:897.5px;top:329.555px;height:20px;line-height:20px;font-size:14.5px;color:#333;font-weight:normal;white-space:nowrap;">正常</div>
<div style="left:1146.6px;top:329.355px;height:20px;line-height:20px;font-size:16px;color:#333;font-weight:normal;white-space:nowrap;letter-spacing:-0.28px">2022–06–08</div>
<svg style="left:1377px;top:329.555px" width="20" height="18" viewBox="0 0 20 18"><path d="M7.5 14.2H2.6V1.5H13.6V7" fill="none" stroke="#444" stroke-width="1.3"/><path d="M4.5 4.5H11.5" stroke="#444" stroke-width="1.3"/><path d="M4.5 7.5H7M4.5 10.5H6.5" stroke="#888" stroke-width="1.2"/><circle cx="13" cy="11.5" r="3.3" fill="none" stroke="#444" stroke-width="1.3"/><path d="M15.4 13.9L17.2 15.7" stroke="#444" stroke-width="1.3"/></svg>
<svg style="left:1414px;top:329.055px" width="15" height="18" viewBox="0 0 15 18"><path d="M1 5H14" stroke="#444" stroke-width="1.3"/><path d="M6 4.8V3.8A1.5 1.5 0 0 1 9 3.8V4.8" fill="none" stroke="#444" stroke-width="1.3"/><path d="M2.5 5.5V15.7H12.5V5.5" fill="none" stroke="#444" stroke-width="1.3"/><path d="M5.8 8V13M9.2 8V13" stroke="#444" stroke-width="1.3"/></svg>
<div style="left:0px;top:358.46999999999997px;width:1465.5px;height:39.83px;background:#f0f1f7"></div>
<div style="left:0px;top:397.29999999999995px;width:1465.5px;height:1px;background:#e3e4ea"></div>
<div style="left:0px;top:369.385px;height:20px;line-height:20px;font-size:15px;color:#333;font-weight:normal;white-space:nowrap;width:73.5px;text-align:center">10</div>
<div style="left:96px;top:369.885px;width:15.5px;height:15.5px;background:#fff;border:1px solid #c4c4c8;border-radius:3px"></div>
<div style="left:151.6px;top:369.385px;height:20px;line-height:20px;font-size:11.5px;color:#444;font-weight:normal;white-space:nowrap;letter-spacing:2.5px">––</div>
<div style="left:287.0px;top:368.385px;height:20px;line-height:20px;font-size:15px;color:#333;font-weight:normal;white-space:nowrap;width:9.800000000000011px;overflow:hidden">1:</div>
<div style="left:400px;top:369.385px;height:20px;line-height:20px;font-size:14.5px;color:#333;font-weight:normal;white-space:nowrap;width:15.8px;overflow:hidden">上</div>
<div style="left:680px;top:369.385px;height:20px;line-height:20px;font-size:14.5px;color:#333;font-weight:normal;white-space:nowrap;">蓝票</div>
<div style="left:773px;top:369.385px;height:20px;line-height:20px;font-size:14.5px;color:#333;font-weight:normal;white-space:nowrap;">增值税普通...</div>
<div style="left:897.5px;top:369.385px;height:20px;line-height:20px;font-size:14.5px;color:#333;font-weight:normal;white-space:nowrap;">正常</div>
<div style="left:1146.6px;top:369.185px;height:20px;line-height:20px;font-size:16px;color:#333;font-weight:normal;white-space:nowrap;letter-spacing:-0.28px">2022–06–09</div>
<svg style="left:1377px;top:369.385px" width="20" height="18" viewBox="0 0 20 18"><path d="M7.5 14.2H2.6V1.5H13.6V7" fill="none" stroke="#444" stroke-width="1.3"/><path d="M4.5 4.5H11.5" stroke="#444" stroke-width="1.3"/><path d="M4.5 7.5H7M4.5 10.5H6.5" stroke="#888" stroke-width="1.2"/><circle cx="13" cy="11.5" r="3.3" fill="none" stroke="#444" stroke-width="1.3"/><path d="M15.4 13.9L17.2 15.7" stroke="#444" stroke-width="1.3"/></svg>
<svg style="left:1414px;top:368.885px" width="15" height="18" viewBox="0 0 15 18"><path d="M1 5H14" stroke="#444" stroke-width="1.3"/><path d="M6 4.8V3.8A1.5 1.5 0 0 1 9 3.8V4.8" fill="none" stroke="#444" stroke-width="1.3"/><path d="M2.5 5.5V15.7H12.5V5.5" fill="none" stroke="#444" stroke-width="1.3"/><path d="M5.8 8V13M9.2 8V13" stroke="#444" stroke-width="1.3"/></svg>
<div style="left:0px;top:398.29999999999995px;width:1465.5px;height:39.83px;background:#ffffff"></div>
<div style="left:0px;top:437.12999999999994px;width:1465.5px;height:1px;background:#e3e4ea"></div>
<div style="left:0px;top:409.215px;height:20px;line-height:20px;font-size:15px;color:#333;font-weight:normal;white-space:nowrap;width:73.5px;text-align:center">11</div>
<div style="left:96px;top:409.715px;width:15.5px;height:15.5px;background:#fff;border:1px solid #c4c4c8;border-radius:3px"></div>
<div style="left:151.6px;top:409.215px;height:20px;line-height:20px;font-size:11.5px;color:#444;font-weight:normal;white-space:nowrap;letter-spacing:2.5px">––</div>
<div style="left:285.6px;top:408.215px;height:20px;line-height:20px;font-size:15px;color:#333;font-weight:normal;white-space:nowrap;width:11.199999999999989px;overflow:hidden">30</div>
<div style="left:400px;top:409.215px;height:20px;line-height:20px;font-size:14.5px;color:#333;font-weight:normal;white-space:nowrap;width:15.8px;overflow:hidden">老</div>
<div style="left:680px;top:409.215px;height:20px;line-height:20px;font-size:14.5px;color:#333;font-weight:normal;white-space:nowrap;">蓝票</div>
<div style="left:773px;top:409.215px;height:20px;line-height:20px;font-size:14.5px;color:#333;font-weight:normal;white-space:nowrap;">增值税普通...</div>
<div style="left:897.5px;top:409.215px;height:20px;line-height:20px;font-size:14.5px;color:#333;font-weight:normal;white-space:nowrap;">正常</div>
<div style="left:1146.6px;top:409.015px;height:20px;line-height:20px;font-size:16px;color:#333;font-weight:normal;white-space:nowrap;letter-spacing:-0.28px">2022–06–09</div>
<svg style="left:1377px;top:409.215px" width="20" height="18" viewBox="0 0 20 18"><path d="M7.5 14.2H2.6V1.5H13.6V7" fill="none" stroke="#444" stroke-width="1.3"/><path d="M4.5 4.5H11.5" stroke="#444" stroke-width="1.3"/><path d="M4.5 7.5H7M4.5 10.5H6.5" stroke="#888" stroke-width="1.2"/><circle cx="13" cy="11.5" r="3.3" fill="none" stroke="#444" stroke-width="1.3"/><path d="M15.4 13.9L17.2 15.7" stroke="#444" stroke-width="1.3"/></svg>
<svg style="left:1414px;top:408.715px" width="15" height="18" viewBox="0 0 15 18"><path d="M1 5H14" stroke="#444" stroke-width="1.3"/><path d="M6 4.8V3.8A1.5 1.5 0 0 1 9 3.8V4.8" fill="none" stroke="#444" stroke-width="1.3"/><path d="M2.5 5.5V15.7H12.5V5.5" fill="none" stroke="#444" stroke-width="1.3"/><path d="M5.8 8V13M9.2 8V13" stroke="#444" stroke-width="1.3"/></svg>
<div style="left:0px;top:438.13px;width:1465.5px;height:39.83px;background:#f0f1f7"></div>
<div style="left:0px;top:476.96px;width:1465.5px;height:1px;background:#e3e4ea"></div>
<div style="left:0px;top:449.045px;height:20px;line-height:20px;font-size:15px;color:#333;font-weight:normal;white-space:nowrap;width:73.5px;text-align:center">12</div>
<div style="left:96px;top:448.545px;width:15.5px;height:15.5px;background:#e8e9f3;border:1px solid #d9dbe3;border-radius:3px"></div>
<div style="left:150px;top:449.045px;height:20px;line-height:20px;font-size:15px;color:#222;font-weight:normal;white-space:nowrap;"><span style="text-decoration:underline">去查看</span></div>
<div style="left:289.0px;top:448.045px;height:20px;line-height:20px;font-size:15px;color:#333;font-weight:normal;white-space:nowrap;width:7.800000000000011px;overflow:hidden">1</div>
<div style="left:400px;top:449.045px;height:20px;line-height:20px;font-size:14.5px;color:#333;font-weight:normal;white-space:nowrap;width:15.8px;overflow:hidden">罗</div>
<div style="left:680px;top:449.045px;height:20px;line-height:20px;font-size:14.5px;color:#333;font-weight:normal;white-space:nowrap;">蓝票</div>
<div style="left:773px;top:449.045px;height:20px;line-height:20px;font-size:14.5px;color:#333;font-weight:normal;white-space:nowrap;">增值税普通...</div>
<div style="left:897.5px;top:449.045px;height:20px;line-height:20px;font-size:14.5px;color:#333;font-weight:normal;white-space:nowrap;">正常</div>
<div style="left:1146.6px;top:448.845px;height:20px;line-height:20px;font-size:16px;color:#333;font-weight:normal;white-space:nowrap;letter-spacing:-0.28px">2022–12–22</div>
<svg style="left:1377px;top:449.045px" width="20" height="18" viewBox="0 0 20 18"><path d="M7.5 14.2H2.6V1.5H13.6V7" fill="none" stroke="#444" stroke-width="1.3"/><path d="M4.5 4.5H11.5" stroke="#444" stroke-width="1.3"/><path d="M4.5 7.5H7M4.5 10.5H6.5" stroke="#888" stroke-width="1.2"/><circle cx="13" cy="11.5" r="3.3" fill="none" stroke="#444" stroke-width="1.3"/><path d="M15.4 13.9L17.2 15.7" stroke="#444" stroke-width="1.3"/></svg>
<svg style="left:1414px;top:448.545px" width="15" height="18" viewBox="0 0 15 18"><path d="M1 5H14" stroke="#444" stroke-width="1.3"/><path d="M6 4.8V3.8A1.5 1.5 0 0 1 9 3.8V4.8" fill="none" stroke="#444" stroke-width="1.3"/><path d="M2.5 5.5V15.7H12.5V5.5" fill="none" stroke="#444" stroke-width="1.3"/><path d="M5.8 8V13M9.2 8V13" stroke="#444" stroke-width="1.3"/></svg>
</div>
<div style="left:1370.7px;top:257px;width:6px;height:469.5px;background:linear-gradient(to right,rgba(0,0,0,0),rgba(0,0,0,0.05))"></div>
<div style="left:1376.2px;top:257px;width:1px;height:469.5px;background:rgba(0,0,0,0.07)"></div>
<div style="left:36px;top:726.5px;width:1465.5px;height:39.799999999999955px;background:#fbf1e1"></div>
<div style="left:59px;top:737px;height:20px;line-height:20px;font-size:14.5px;color:#333;font-weight:normal;white-space:nowrap;">合计</div>
<div style="left:36px;top:726.5px;width:1465.5px;height:1px;background:#e2ddd3"></div>
<div style="left:36px;top:765.5px;width:1465.5px;height:1px;background:#e2e0dc"></div>
<div style="left:170px;top:726.5px;width:1px;height:58.299999999999955px;background:#e6e1d6"></div>
<div style="left:36px;top:766.3px;width:1465.5px;height:18.5px;background:linear-gradient(#fff,#f7f7f7)"></div>
<div style="left:36px;top:783.5px;width:1465.5px;height:1.5px;background:#cfcfd2"></div>
<div style="left:1376.7px;top:766.3px;width:1px;height:17.5px;background:#dadada"></div>
<div style="left:861px;top:803px;height:20px;line-height:20px;font-size:14.5px;color:#333;font-weight:normal;white-space:nowrap;">每页显示</div>
<div style="left:931.5px;top:794px;width:73.3px;height:38.7px;background:#fff;border:1px solid #dcdcdc;border-radius:3px;box-sizing:border-box"></div>
<div style="left:941.4px;top:805px;height:20px;line-height:20px;font-size:16px;color:#333;font-weight:normal;white-space:nowrap;">50</div>
<svg style="left:980px;top:806px" width="18" height="12" viewBox="0 0 18 12"><path d="M1.5 2L9 9.5L16.5 2" fill="none" stroke="#555" stroke-width="1.4"/></svg>
<svg style="left:1038px;top:804px" width="15" height="18" viewBox="0 0 15 18"><path d="M2 1.5V16.5M13 1.5L5 9L13 16.5" fill="none" stroke="#b0b0b0" stroke-width="1.4"/></svg>
<svg style="left:1072px;top:804px" width="12" height="18" viewBox="0 0 12 18"><path d="M10 1.5L2.5 9L10 16.5" fill="none" stroke="#b0b0b0" stroke-width="1.4"/></svg>
<div style="left:1102.4px;top:803px;height:20px;line-height:20px;font-size:14.5px;color:#333;font-weight:normal;white-space:nowrap;">第</div>
<div style="left:1127px;top:794px;width:74.4px;height:38.7px;background:#fff;border:1px solid #dcdcdc;border-radius:3px;box-sizing:border-box"></div>
<div style="left:1139.5px;top:805px;height:20px;line-height:20px;font-size:16px;color:#333;font-weight:normal;white-space:nowrap;">1</div>
<div style="left:1211.4px;top:803px;height:20px;line-height:20px;font-size:14.5px;color:#333;font-weight:normal;white-space:nowrap;">页</div>
<svg style="left:1245px;top:804px" width="12" height="18" viewBox="0 0 12 18"><path d="M2 1.5L9.5 9L2 16.5" fill="none" stroke="#b0b0b0" stroke-width="1.4"/></svg>
<svg style="left:1275px;top:804px" width="15" height="18" viewBox="0 0 15 18"><path d="M13 1.5V16.5M2 1.5L10 9L2 16.5" fill="none" stroke="#b0b0b0" stroke-width="1.4"/></svg>
<div style="left:1321.3px;top:803px;height:20px;line-height:20px;font-size:14.2px;color:#333;font-weight:normal;white-space:nowrap;">共1页, 12条记录</div>
<div style="left:10px;top:841px;width:1518px;height:5px;background:linear-gradient(#fdfdfd,#eceef0)"></div>
<div style="left:10px;top:846px;width:1518px;height:50px;background:#f4fbfe"></div>
<svg style="left:26px;top:863px" width="20" height="16" viewBox="0 0 20 16"><path d="M1.5 1.5H18.5V4.5L17 6L18.5 7.5L17 9L18.5 10.5V14.5H1.5V10.5L3 9L1.5 7.5L3 6L1.5 4.5Z" fill="none" stroke="#5ab3da" stroke-width="1.3" stroke-linejoin="round"/><path d="M5 5H15M5 11H15" stroke="#8fcbe6" stroke-width="1.2"/><rect x="7" y="6.8" width="6" height="2.6" fill="#5ab3da"/></svg>
<div style="left:52px;top:861px;height:20px;line-height:20px;font-size:14.8px;color:#333;font-weight:normal;white-space:nowrap;">发票查验及拍照</div>
<svg style="left:161px;top:864px" width="15" height="15" viewBox="0 0 15 15"><circle cx="7.5" cy="7.5" r="7.5" fill="#5b8def"/><path d="M7.5 3.5V8.8" stroke="#fff" stroke-width="1.8"/><circle cx="7.5" cy="11.2" r="1" fill="#fff"/></svg>
<div style="left:214px;top:861px;height:20px;line-height:20px;font-size:14.8px;color:#333;font-weight:normal;white-space:nowrap;">剩余张数：393</div>
<div style="left:353px;top:861px;height:20px;line-height:20px;font-size:14.8px;color:#333;font-weight:normal;white-space:nowrap;">已用张数：7</div>
<svg style="left:1496px;top:864px" width="14" height="14" viewBox="0 0 14 14"><path d="M1.5 1.5L12.5 12.5M12.5 1.5L1.5 12.5" stroke="#333" stroke-width="1.4"/></svg>
<svg style="left:793px;top:114px" width="22" height="22" viewBox="0 0 22 22"><g fill="none" stroke="#5866f0" stroke-width="1.4"><rect x="1.7" y="1.8" width="7.3" height="7.3" rx="1.6"/><rect x="12.6" y="1.8" width="7.3" height="7.3" rx="1.6"/><rect x="1.7" y="12.6" width="7.3" height="7.3" rx="1.6"/></g><g fill="#5866f0"><circle cx="5.35" cy="5.45" r="1.1"/><circle cx="16.25" cy="5.45" r="1.1"/><circle cx="5.35" cy="16.25" r="1.1"/></g><g stroke="#5866f0" stroke-width="1.2" stroke-dasharray="2 1.2"><path d="M13 12.5V20.5M16.3 12.5V20.5M19.6 12.5V20.5"/></g></svg>
<div style="left:847px;top:106px;width:148.5px;height:38.3px;background:#5866f0;border-radius:3px"></div>
<svg style="left:863px;top:115px" width="22" height="20" viewBox="0 0 22 20"><path d="M11 4.5C7 4.5 4.5 7.5 4 9.5L1.5 11L4 12.5C4.5 16 7.5 18.5 11 18.5C14.5 18.5 17.5 16 18 12.5L20.5 11L18 9.5C17.5 7.5 15 4.5 11 4.5Z" fill="none" stroke="#fff" stroke-width="1.6" stroke-linejoin="round"/><path d="M6.5 8.5L11 11L15.5 8.5" fill="none" stroke="#fff" stroke-width="1.5"/><ellipse cx="11" cy="3.3" rx="2.6" ry="2" fill="#fff"/><circle cx="8.6" cy="13.6" r="1.3" fill="#fff"/><circle cx="13.4" cy="13.6" r="1.3" fill="#fff"/></svg>
<div style="left:889.7px;top:116px;height:20px;line-height:20px;font-size:14.7px;color:#fff;font-weight:bold;white-space:nowrap;">税务数字账户</div>
<div style="left:1016px;top:106px;width:80.8px;height:38.3px;background:#5866f0;border-radius:3px"></div>
<div style="left:1031.5px;top:116px;height:20px;line-height:20px;font-size:14.7px;color:#fff;font-weight:bold;white-space:nowrap;">取票</div>
<svg style="left:1067px;top:121px" width="15" height="10" viewBox="0 0 15 10"><path d="M1.5 2L7.5 8L13.5 2" fill="none" stroke="#fff" stroke-width="1.5"/></svg>
<svg style="left:1114px;top:120px" width="13" height="13" viewBox="0 0 13 13"><g fill="none" stroke="#444" stroke-width="1.2"><rect x="1" y="7" width="4.3" height="4.3" rx="1"/><rect x="7.5" y="7" width="4.3" height="4.3" rx="1"/><rect x="7.5" y="1" width="4.3" height="4.3" rx="1"/><path d="M1.5 1.5L5 5"/></g></svg>
<div style="left:1132.7px;top:116px;height:20px;line-height:20px;font-size:14.6px;color:#333;font-weight:normal;white-space:nowrap;">批量操作</div>
<svg style="left:1221px;top:120px" width="16" height="14" viewBox="0 0 16 14"><path d="M12.5 3.5V1.5H1.5V12.5H12.5V10.5" fill="none" stroke="#444" stroke-width="1.3"/><path d="M4 4.5H8M4 9.5H8M6.5 7H15M12.5 4.5L15 7L12.5 9.5" fill="none" stroke="#444" stroke-width="1.2"/></svg>
<div style="left:1241.5px;top:116px;height:20px;line-height:20px;font-size:14.6px;color:#333;font-weight:normal;white-space:nowrap;">生成凭证</div>
<svg style="left:1330.5px;top:117.5px" width="16" height="16" viewBox="0 0 16 16"><circle cx="8" cy="8" r="6.8" fill="none" stroke="#444" stroke-width="1.2"/><path d="M8 4V12M4 8H12" stroke="#444" stroke-width="1.2"/></svg>
<div style="left:1351.4px;top:116px;height:20px;line-height:20px;font-size:14.6px;color:#333;font-weight:normal;white-space:nowrap;">新增</div>
<svg style="left:1410.5px;top:118px" width="16" height="16" viewBox="0 0 16 16"><path d="M13.5 8A5.6 5.6 0 1 1 11.4 3.4" fill="none" stroke="#444" stroke-width="1.5"/><path d="M9.5 1.3L13.6 2.2L12.2 6Z" fill="#444"/></svg>
<div style="left:1431px;top:116px;height:20px;line-height:20px;font-size:14.6px;color:#333;font-weight:normal;white-space:nowrap;">刷新</div>
<div style="left:1549px;top:121px;width:76px;height:36.5px;background:#5866f0"></div>
<div style="left:1569px;top:128.5px;height:20px;line-height:20px;font-size:13.5px;color:#fff;font-weight:normal;white-space:nowrap;-webkit-text-stroke:0.6px #fff;">账期</div>
<svg style="left:1600px;top:137px" width="8" height="6" viewBox="0 0 8 6"><path d="M0.5 0.5H7.5L4 5Z" fill="#fff"/></svg>
<div style="left:1549.5px;top:157.5px;width:74px;height:583px;background:#fff;box-shadow:0 2px 4px rgba(0,0,0,0.22)"></div>
<div style="left:1527.7px;top:160px;width:21.5px;height:35px;background:#f2f2f3;box-shadow:-1px 1px 3px rgba(0,0,0,0.15)"></div>
<svg style="left:1533px;top:174px" width="13" height="13" viewBox="0 0 13 13"><path d="M1.5 1.5L6 6.5L1.5 11.5M6.5 1.5L11 6.5L6.5 11.5" fill="none" stroke="#a5a5a8" stroke-width="1.1"/></svg>
<div style="left:1559px;top:171px;height:20px;line-height:20px;font-size:13.3px;color:#222;font-weight:normal;white-space:nowrap;-webkit-text-stroke:0.45px #222;">期间选择</div>
<div style="left:1555.7px;top:197.5px;width:62.8px;height:58.4px;background:#f4f4f5;border-radius:3px"></div>
<div style="left:1555.7px;top:197.5px;width:60px;height:59px;overflow:hidden">
<div style="left:2.4px;top:0.5px;height:22px;line-height:22px;font-size:14px;color:#222;font-weight:normal;white-space:nowrap;-webkit-text-stroke:0.2px #222;transform:scaleX(1.19);transform-origin:0 0">2023.05</div>
<div style="left:2.4px;top:34.3px;height:22px;line-height:22px;font-size:14px;color:#222;font-weight:normal;white-space:nowrap;-webkit-text-stroke:0.2px #222;transform:scaleX(1.19);transform-origin:0 0">2023.05</div>
<div style="left:30.8px;top:26.5px;width:1px;height:5.5px;background:#bbb"></div>
</div>
<div style="left:1549.5px;top:263px;width:74px;height:3px;background:linear-gradient(#f0f0f2,#fff)"></div>
<svg style="left:1573.8px;top:279.5px" width="25" height="25" viewBox="0 0 25 25"><circle cx="12.5" cy="12.5" r="12.4" fill="#5866f0"/><path d="M7.5 12.5L12.5 7.8L17.5 12.5M7.5 17L12.5 12.3L17.5 17" fill="none" stroke="#fff" stroke-width="1.5"/></svg>
<div style="left:1549.5px;top:316.0px;height:20px;line-height:20px;font-size:13.5px;color:#222;font-weight:normal;white-space:nowrap;-webkit-text-stroke:0.45px #222;width:74px;text-align:center">7月</div>
<div style="left:1549.5px;top:348.4px;height:20px;line-height:20px;font-size:13.5px;color:#222;font-weight:normal;white-space:nowrap;-webkit-text-stroke:0.45px #222;width:74px;text-align:center">8月</div>
<div style="left:1549.5px;top:380.8px;height:20px;line-height:20px;font-size:13.5px;color:#222;font-weight:normal;white-space:nowrap;-webkit-text-stroke:0.45px #222;width:74px;text-align:center">9月</div>
<div style="left:1549.5px;top:413.2px;height:20px;line-height:20px;font-size:13.5px;color:#222;font-weight:normal;white-space:nowrap;-webkit-text-stroke:0.45px #222;width:74px;text-align:center">10月</div>
<div style="left:1549.5px;top:445.6px;height:20px;line-height:20px;font-size:13.5px;color:#222;font-weight:normal;white-space:nowrap;-webkit-text-stroke:0.45px #222;width:74px;text-align:center">11月</div>
<div style="left:1549.5px;top:478.0px;height:20px;line-height:20px;font-size:13.5px;color:#222;font-weight:normal;white-space:nowrap;-webkit-text-stroke:0.45px #222;width:74px;text-align:center">12月</div>
<div style="left:1549.5px;top:510.4px;height:20px;line-height:20px;font-size:13.5px;color:#222;font-weight:normal;white-space:nowrap;-webkit-text-stroke:0.45px #222;width:74px;text-align:center">1月</div>
<div style="left:1549.5px;top:542.8px;height:20px;line-height:20px;font-size:13.5px;color:#222;font-weight:normal;white-space:nowrap;-webkit-text-stroke:0.45px #222;width:74px;text-align:center">2月</div>
<div style="left:1549.5px;top:575.2px;height:20px;line-height:20px;font-size:13.5px;color:#222;font-weight:normal;white-space:nowrap;-webkit-text-stroke:0.45px #222;width:74px;text-align:center">3月</div>
<div style="left:1549.5px;top:607.5999999999999px;height:20px;line-height:20px;font-size:13.5px;color:#222;font-weight:normal;white-space:nowrap;-webkit-text-stroke:0.45px #222;width:74px;text-align:center">4月</div>
<div style="left:1558.3px;top:634px;width:56.5px;height:29px;background:#5866f0;border-radius:15px"></div>
<div style="left:1549.5px;top:638.6px;height:20px;line-height:20px;font-size:13.5px;color:#fff;font-weight:normal;white-space:nowrap;-webkit-text-stroke:0.45px #fff;width:74px;text-align:center">5月</div>
<div style="left:1549.5px;top:671px;height:20px;line-height:20px;font-size:13.5px;color:#222;font-weight:normal;white-space:nowrap;-webkit-text-stroke:0.45px #222;width:74px;text-align:center">6月</div>
<svg style="left:1574px;top:702.5px" width="25" height="25" viewBox="0 0 25 25"><circle cx="12.5" cy="12.5" r="12.4" fill="#bdbdbf"/><path d="M7.5 8L12.5 12.7L17.5 8M7.5 12.5L12.5 17.2L17.5 12.5" fill="none" stroke="#fff" stroke-width="1.5"/></svg>
<div style="left:1533.4px;top:499.4px;width:40.4px;height:15px;background:#2343f2;border-radius:4.5px"></div>
<div style="left:1533.4px;top:497px;height:19px;line-height:19px;font-size:16px;color:#fff;font-weight:bold;white-space:nowrap;width:40.4px;text-align:center;-webkit-text-stroke:0.3px #fff">2023</div>
<div style="left:776.7px;top:100.3px;width:55.59999999999991px;height:49.7px;border:5px solid #f3260f;box-sizing:border-box"></div>
<div style="left:838.6px;top:100.3px;width:165.69999999999993px;height:49.7px;border:5px solid #f3260f;box-sizing:border-box"></div>
<div style="left:1008.5px;top:100.3px;width:96.5px;height:49.7px;border:5px solid #f3260f;box-sizing:border-box"></div>
<div style="left:1309.3px;top:100.4px;width:97.10000000000014px;height:49.79999999999998px;border:5px solid #f3260f;box-sizing:border-box"></div>
<div style="left:849.5px;top:74px;height:22px;line-height:22px;font-size:17.8px;color:#f3260f;font-weight:normal;white-space:nowrap;-webkit-text-stroke:0.6px #f3260f;">税务数字账户取票</div>
<div style="left:1323.3px;top:74px;height:22px;line-height:22px;font-size:17.8px;color:#f3260f;font-weight:normal;white-space:nowrap;-webkit-text-stroke:0.6px #f3260f;">录入采集</div>
<div style="left:742px;top:154.5px;height:22px;line-height:22px;font-size:17.8px;color:#f3260f;font-weight:normal;white-space:nowrap;-webkit-text-stroke:0.6px #f3260f;">二维码扫描查验</div>
<div style="left:730.8px;top:176.5px;height:22px;line-height:22px;font-size:17.8px;color:#f3260f;font-weight:normal;white-space:nowrap;-webkit-text-stroke:0.6px #f3260f;">OCR拍照识别查验</div>
<div style="left:1021.9px;top:154.5px;height:22px;line-height:22px;font-size:17.8px;color:#f3260f;font-weight:normal;white-space:nowrap;-webkit-text-stroke:0.6px #f3260f;">税盘取票</div>
<div style="left:1021.9px;top:176.5px;height:22px;line-height:22px;font-size:17.8px;color:#f3260f;font-weight:normal;white-space:nowrap;-webkit-text-stroke:0.6px #f3260f;">导入采集</div>
<div style="left:332.8px;top:308px;width:86.4px;height:412px;background:#d4d4d4"></div>
<div style="left:451.8px;top:308px;width:87.8px;height:412px;background:#d4d4d4"></div>
<div style="left:545.6px;top:207px;width:2px;height:47px;background:#68b7da"></div>
<div style="left:538.6px;top:199.3px;width:16px;height:16px;border-radius:50%;background:rgba(79,170,208,0.48)"></div>
<div style="left:541.35px;top:202.05px;width:10.5px;height:10.5px;border-radius:50%;background:#4faad0"></div>
<div style="left:299.5px;top:253.6px;width:284.3px;height:49px;background:#4faad0;border-radius:4px"></div>
<div style="left:317px;top:268.8px;width:5.8px;height:16.6px;background:#fff"></div>
<div style="left:329.7px;top:268px;height:22px;line-height:22px;font-size:17.3px;color:#fff;font-weight:normal;white-space:nowrap;-webkit-text-stroke:0.35px #fff;letter-spacing:0.2px">这里可以切换是否显示明细</div>
<svg style="left:561px;top:271px" width="13" height="13" viewBox="0 0 13 13"><path d="M1.5 1.5L11.5 11.5M11.5 1.5L1.5 11.5" stroke="#fff" stroke-width="2"/></svg>
<div style="left:920.6px;top:154px;width:2px;height:47px;background:#68b7da"></div>
<div style="left:913.6px;top:146px;width:16px;height:16px;border-radius:50%;background:rgba(79,170,208,0.48)"></div>
<div style="left:916.35px;top:148.75px;width:10.5px;height:10.5px;border-radius:50%;background:#4faad0"></div>
<div style="left:754.2px;top:199.8px;width:335.6px;height:49.2px;background:#4faad0;border-radius:4px"></div>
<div style="left:771.6px;top:215px;width:6.2px;height:17px;background:#fff"></div>
<div style="left:784.3px;top:214px;height:22px;line-height:22px;font-size:17.3px;color:#fff;font-weight:normal;white-space:nowrap;-webkit-text-stroke:0.35px #fff;letter-spacing:0.4px">该功能由原【无盘取票】功能升级</div>
<svg style="left:1067.5px;top:217.5px" width="13" height="13" viewBox="0 0 13 13"><path d="M1.5 1.5L11.5 11.5M11.5 1.5L1.5 11.5" stroke="#fff" stroke-width="2"/></svg>
</div></body></html>
